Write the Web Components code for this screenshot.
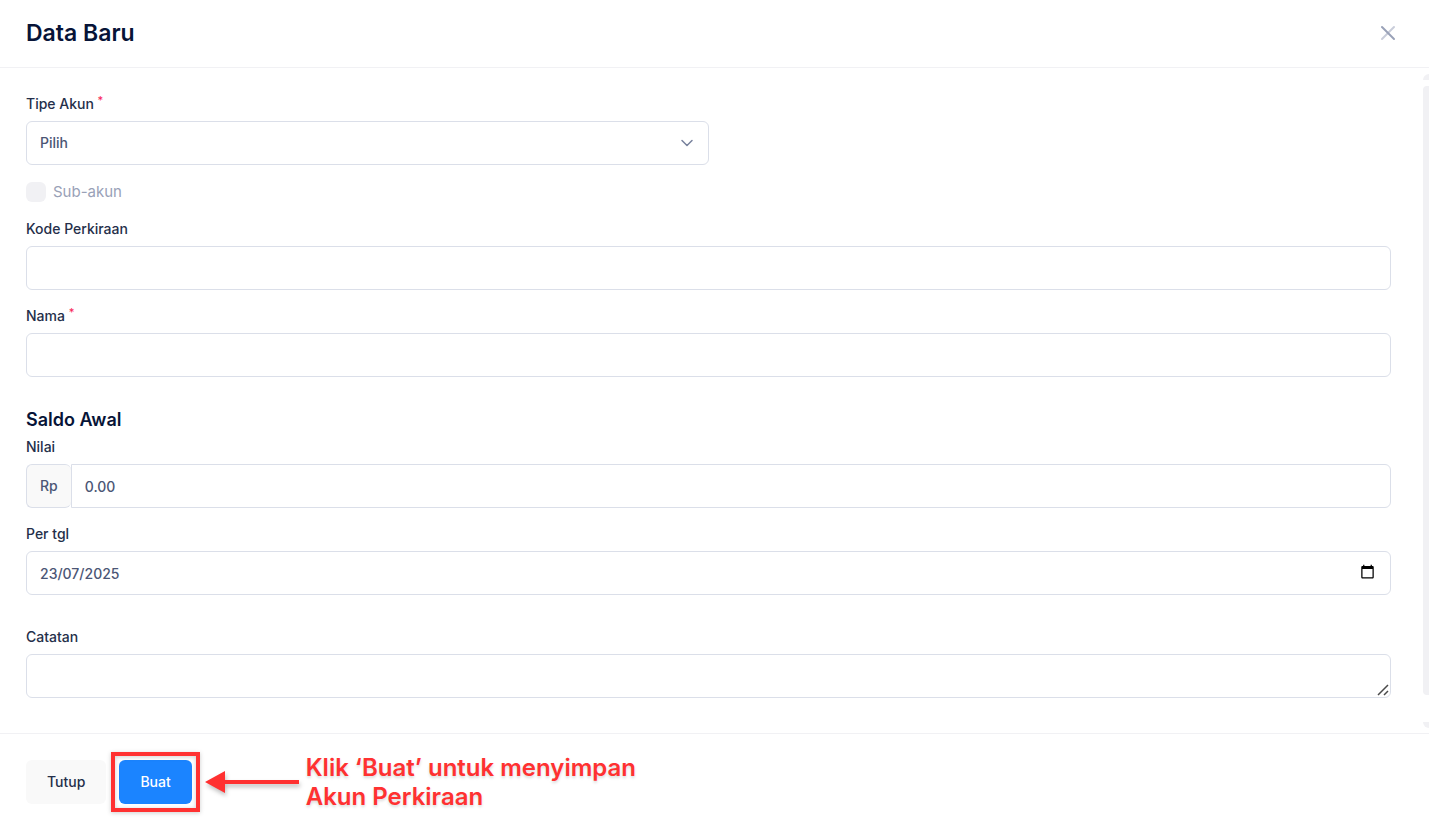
<!DOCTYPE html>
<html lang="id">
<head>
<meta charset="utf-8">
<meta name="viewport" content="width=device-width, initial-scale=1">
<title>Data Baru</title>
<style>
  body {
    margin: 0;
    font-family: Inter, "Liberation Sans", sans-serif;
    font-size: 15px;
    color: #252f4a;
    --ink: #071437;
    --label: #252f4a;
    --text: #4b5675;
    --muted: #99a1b7;
    --border: #dbdfe9;
    --line: #f1f1f4;
    --light: #f9f9f9;
    --primary: #1b84ff;
    --danger: #f8285a;
    --note: #ff3131;
  }
</style>
</head>
<body>
<modal-panel>
  <span slot="title">Data Baru</span>

  <form-field kind="select" label="Tipe Akun" value="Pilih" required half></form-field>
  <check-field disabled>Sub-akun</check-field>
  <form-field label="Kode Perkiraan"></form-field>
  <form-field label="Nama" required></form-field>

  <form-section>
    <span slot="heading">Saldo Awal</span>
    <form-field label="Nilai" prefix="Rp" value="0.00"></form-field>
    <form-field kind="date" label="Per tgl" value="23/07/2025"></form-field>
  </form-section>

  <form-section>
    <form-field kind="textarea" label="Catatan"></form-field>
  </form-section>

  <action-button slot="footer">Tutup</action-button>
  <action-button slot="footer" primary marked>Buat</action-button>
  <callout-note slot="footer">Klik ‘Buat’ untuk menyimpan<br>Akun Perkiraan</callout-note>
</modal-panel>

<script>
class BaseElement extends HTMLElement {
  constructor() {
    super();
    this.attachShadow({ mode: 'open' });
  }

  connectedCallback() {
    this.shadowRoot.innerHTML = this.render();
  }
}

class ModalPanel extends BaseElement {
  render() {
    return `
      <style>
        :host {
          display: flex;
          flex-direction: column;
          min-height: 100vh;
          background: #fff;
        }
        header {
          display: flex;
          align-items: center;
          justify-content: space-between;
          padding: 16px 30px 16px 26px;
          border-bottom: 1px solid var(--line);
        }
        h1 {
          margin: 0;
          font-size: 23px;
          line-height: 35px;
          font-weight: 600;
          color: var(--ink);
        }
        .close {
          display: flex;
          padding: 0;
          border: 0;
          background: none;
          cursor: pointer;
        }
        .body { flex: 1; display: flex; }
        .fields {
          flex: 1;
          display: flex;
          flex-direction: column;
          gap: 16px;
          padding: 26px 32px 26px 26px;
        }
        .scroll {
          width: 6px;
          display: flex;
          flex-direction: column;
          gap: 6px;
          padding: 6px 0 5px;
        }
        .scroll i { height: 6px; background: var(--line); }
        .up { border-top-left-radius: 6px; }
        .down { border-bottom-left-radius: 6px; }
        .scroll .thumb { flex: 1; margin-bottom: 21px; border-radius: 4px 0 0 4px; }
        footer {
          display: flex;
          align-items: center;
          gap: 13px;
          padding: 19px 26px 16px;
          border-top: 1px solid var(--line);
        }
      </style>
      <header>
        <h1><slot name="title"></slot></h1>
        <button class="close" type="button" aria-label="Tutup">
          <svg width="22" height="22" viewBox="0 0 22 22" fill="none" stroke-width="2" stroke-linecap="round">
            <path d="M17 4 5 16" stroke="#c9cdda"/>
            <path d="m5 4 12 12" stroke="#99a1b7"/>
          </svg>
        </button>
      </header>
      <div class="body">
        <div class="fields"><slot></slot></div>
        <div class="scroll" aria-hidden="true">
          <i class="up"></i><i class="thumb"></i><i class="down"></i>
        </div>
      </div>
      <footer><slot name="footer"></slot></footer>
    `;
  }
}

class FormSection extends BaseElement {
  render() {
    const heading = this.querySelector('[slot=heading]')
      ? '<h2><slot name="heading"></slot></h2>' : '';
    return `
      <style>
        :host { display: block; margin-top: 16px; }
        h2 {
          margin: 0 0 6px;
          font-size: 18px;
          line-height: 22px;
          font-weight: 600;
          color: var(--ink);
        }
        .rows { display: flex; flex-direction: column; gap: 16px; }
      </style>
      ${heading}
      <div class="rows"><slot></slot></div>
    `;
  }
}

class FormField extends BaseElement {
  control() {
    const value = this.getAttribute('value') || '';
    const prefix = this.getAttribute('prefix');

    switch (this.getAttribute('kind')) {
      case 'select':
        return `
          <select id="control"><option>${value}</option></select>
          <svg class="chevron" width="16" height="16" viewBox="0 0 16 16" fill="none"
            stroke="#78829d" stroke-width="1.5" stroke-linecap="round" stroke-linejoin="round">
            <path d="m3 5.500 5 5 5-5"/>
          </svg>`;
      case 'date':
        return `
          <input id="control" type="text" inputmode="numeric" value="${value}">
          <button class="picker" type="button" aria-label="Pilih tanggal">
            <svg width="15" height="15" viewBox="0 0 24 24">
              <path d="M20 3h-1V1h-2v2H7V1H5v2H4c-1.1 0-2 .9-2 2v16c0 1.1.9 2 2 2h16c1.1 0 2-.9 2-2V5c0-1.1-.9-2-2-2zm0 18H4V8h16v13z"/>
            </svg>
          </button>`;
      case 'textarea':
        return `
          <textarea id="control" rows="1"></textarea>
          <svg class="grip" width="12" height="12" viewBox="0 0 12 12" fill="none"
            stroke="#4a4a4a" stroke-width="1.5">
            <path d="M1 11 11 1M7 11l4-4"/>
          </svg>`;
      default:
        return `
          ${prefix ? `<span class="prefix">${prefix}</span>` : ''}
          <input id="control" type="text" value="${value}">`;
    }
  }

  render() {
    return `
      <style>
        :host { display: block; }
        :host([half]) { width: 50%; }
        label {
          display: block;
          margin-bottom: 7px;
          font-size: 14px;
          line-height: 20px;
          font-weight: 500;
          color: var(--label);
        }
        .star {
          font-size: 11px;
          line-height: 1;
          vertical-align: 5px;
          color: var(--danger);
        }
        .box { display: flex; position: relative; }
        input, select, textarea {
          box-sizing: border-box;
          flex: 1;
          min-width: 0;
          height: 44px;
          margin: 0;
          padding: 10px 13px;
          border: 1px solid var(--border);
          border-radius: 6px;
          background: #fff;
          font: 500 14px/22px Inter, "Liberation Sans", sans-serif;
          color: var(--text);
          appearance: none;
          outline: none;
        }
        input:focus, select:focus, textarea:focus { border-color: #b5b5c3; }
        textarea { min-height: 44px; resize: vertical; }
        textarea::-webkit-resizer { background: transparent; }
        .chevron {
          position: absolute;
          right: 14px;
          top: 14px;
          pointer-events: none;
        }
        .grip {
          position: absolute;
          right: 2px;
          bottom: 2px;
          pointer-events: none;
        }
        .picker {
          position: absolute;
          right: 16px;
          top: 13px;
          display: flex;
          padding: 0;
          border: 0;
          background: none;
          cursor: pointer;
        }
        .prefix {
          padding: 10px 13px;
          border: 1px solid var(--border);
          border-right: 0;
          border-radius: 6px;
          background: var(--light);
          font-size: 14px;
          font-weight: 500;
          line-height: 22px;
          color: var(--text);
        }
        .prefix + input { border-radius: 0 6px 6px 0; }
      </style>
      <label for="control">${this.getAttribute('label')}${this.hasAttribute('required') ? ' <span class="star">*</span>' : ''}</label>
      <div class="box">${this.control()}</div>
    `;
  }
}

class CheckField extends BaseElement {
  render() {
    return `
      <style>
        :host { display: flex; }
        label {
          display: flex;
          align-items: center;
          gap: 7px;
          line-height: 22px;
          color: var(--muted);
        }
        input {
          appearance: none;
          width: 20px;
          height: 20px;
          margin: 0;
          border-radius: 6px;
          background: var(--line);
        }
        input:checked { background: var(--primary); }
      </style>
      <label>
        <input type="checkbox" ${this.hasAttribute('disabled') ? 'disabled' : ''}>
        <span><slot></slot></span>
      </label>
    `;
  }
}

class ActionButton extends BaseElement {
  render() {
    return `
      <style>
        :host { display: block; position: relative; }
        button {
          display: block;
          padding: 11px 21px;
          border: 0;
          border-radius: 6px;
          background: var(--light);
          font: 500 14px/22px Inter, "Liberation Sans", sans-serif;
          color: var(--label);
          cursor: pointer;
        }
        :host([primary]) button { background: var(--primary); color: #fff; }
        :host([marked])::after {
          content: "";
          position: absolute;
          inset: -8px;
          border: 4px solid var(--note);
          filter: drop-shadow(0 1px 2px rgba(0, 0, 0, 0.2));
          pointer-events: none;
        }
      </style>
      <button type="button"><slot></slot></button>
    `;
  }
}

class CalloutNote extends BaseElement {
  render() {
    return `
      <style>
        :host {
          display: flex;
          align-items: center;
          gap: 7px;
          font-size: 24px;
          line-height: 29px;
          font-weight: 600;
          color: var(--note);
        }
        svg {
          flex: none;
          overflow: visible;
          filter: drop-shadow(1px 3px 2px rgba(0, 0, 0, 0.25));
        }
        p { margin: 0; text-shadow: 0 2px 3px rgba(0, 0, 0, 0.15); }
      </style>
      <svg width="94" height="24" viewBox="0 0 94 24" fill="#ff3131" aria-hidden="true">
        <path d="M0 12 20 1v9h74v4H20v9z"/>
      </svg>
      <p><slot></slot></p>
    `;
  }
}

customElements.define('modal-panel', ModalPanel);
customElements.define('form-section', FormSection);
customElements.define('form-field', FormField);
customElements.define('check-field', CheckField);
customElements.define('action-button', ActionButton);
customElements.define('callout-note', CalloutNote);
</script>
</body>
</html>
